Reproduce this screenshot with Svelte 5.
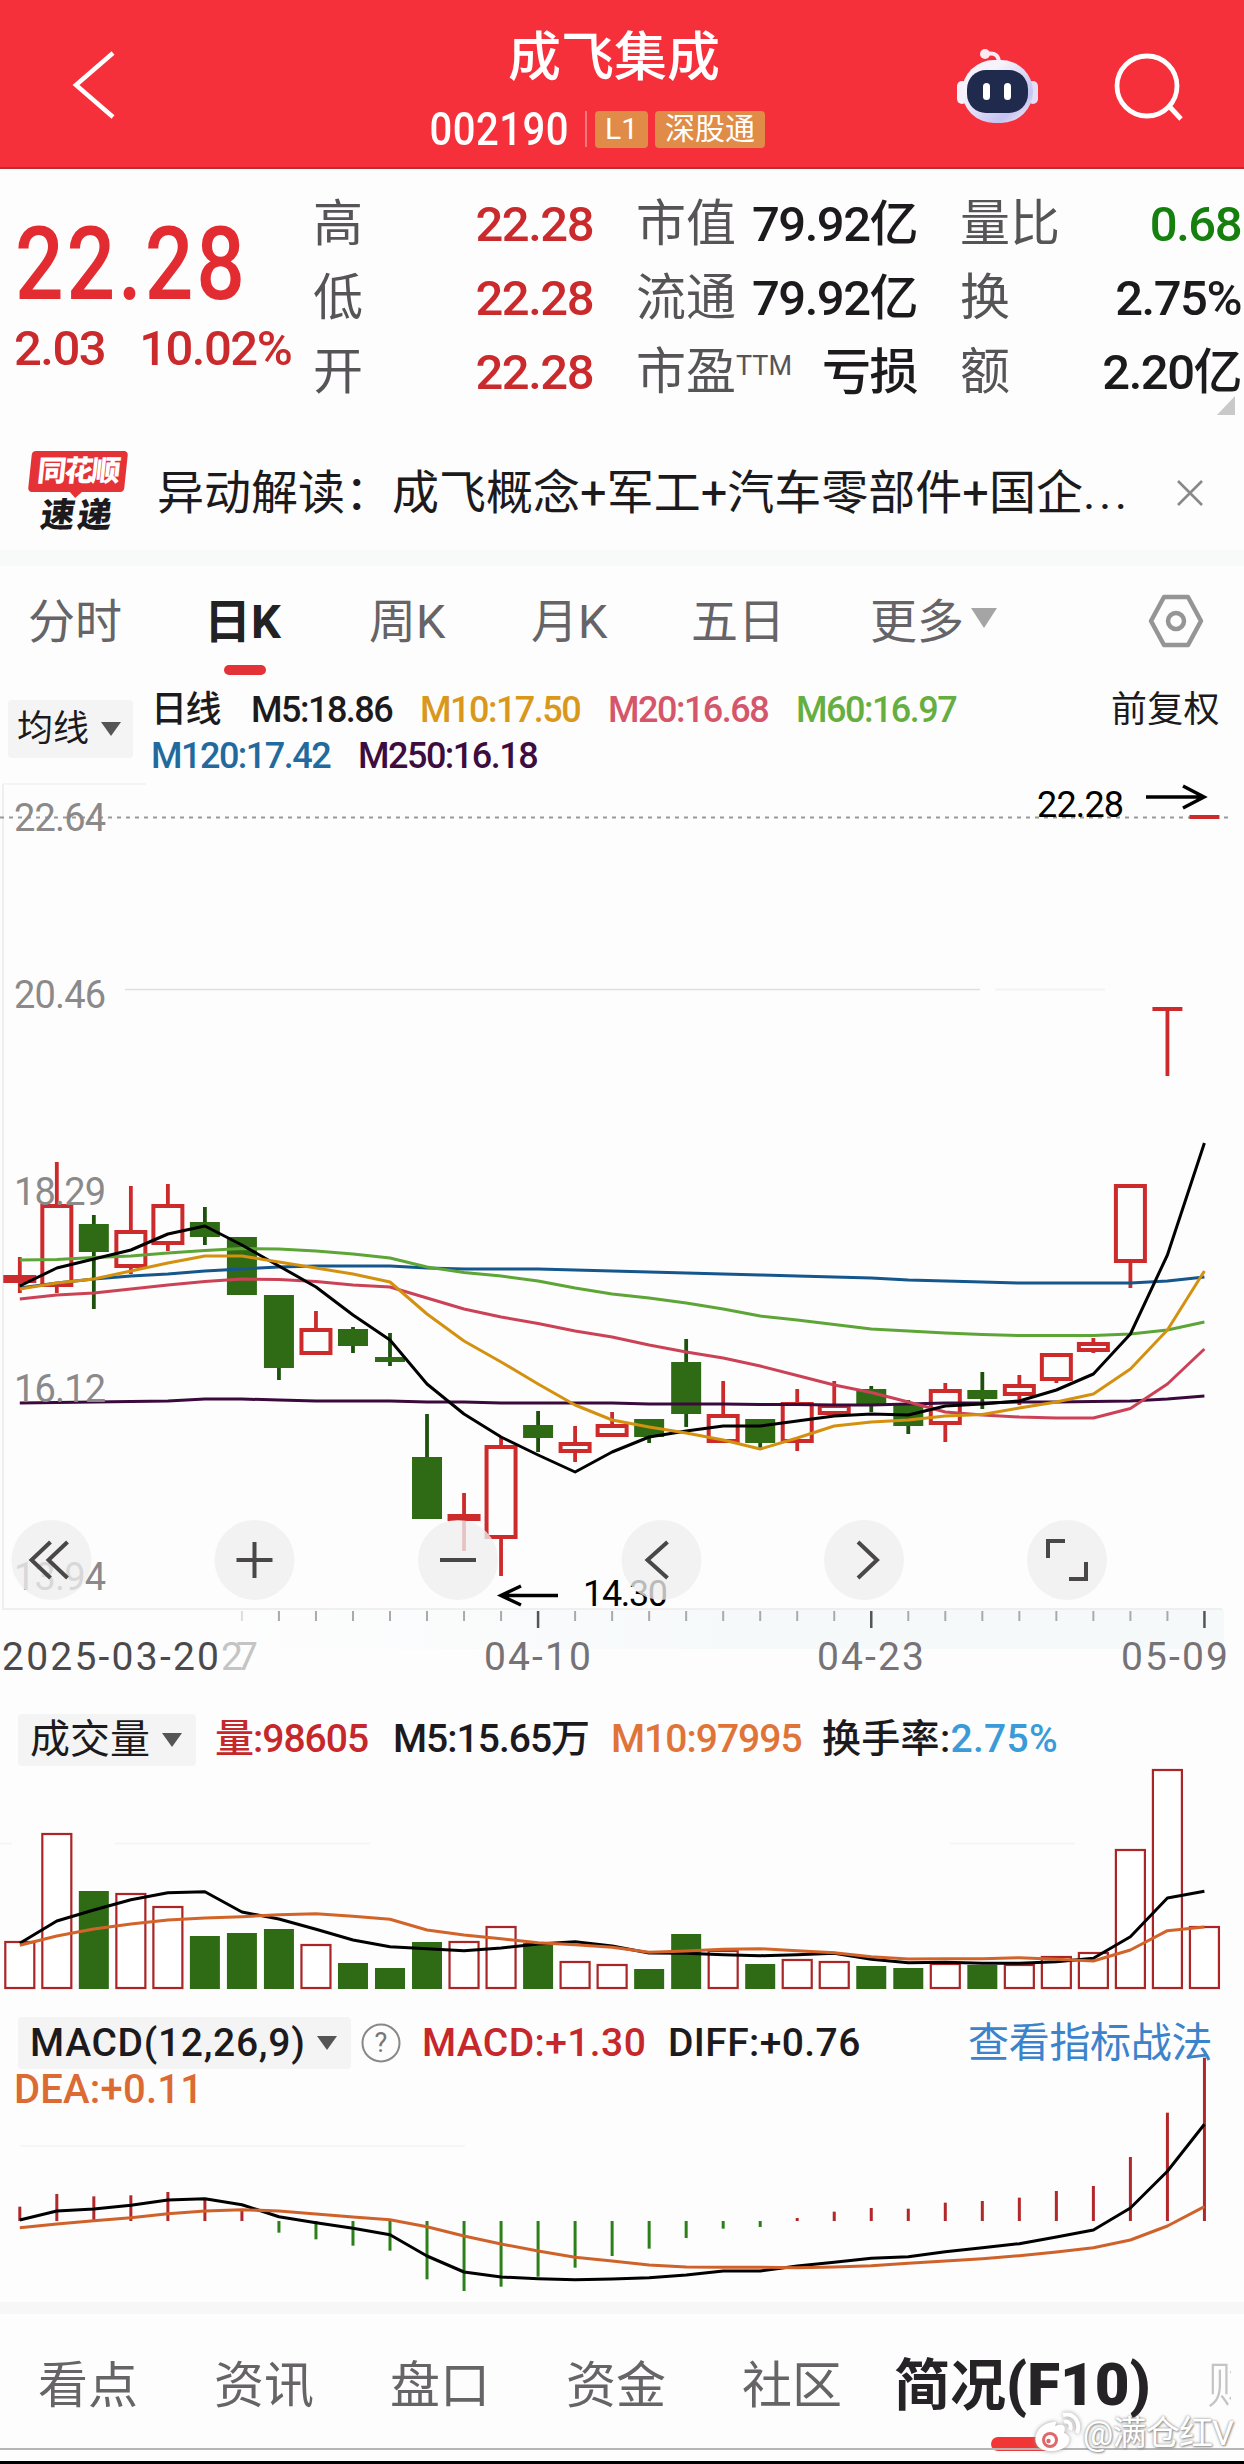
<script>
  const STEP = 37.02;
  const X0 = 19.8;
  const cx = (i) => X0 + STEP * i;

  // [high, top, bottom, low, direction]
  const candles = [
    [1257, 1275, 1283, 1293, 'up'],
    [1162, 1204, 1287, 1293, 'up'],
    [1215, 1224, 1252, 1309, 'down'],
    [1186, 1230, 1268, 1274, 'up'],
    [1184, 1204, 1245, 1251, 'up'],
    [1207, 1222, 1237, 1245, 'down'],
    [1237, 1237, 1295, 1295, 'down'],
    [1295, 1295, 1368, 1380, 'down'],
    [1311, 1328, 1355, 1355, 'up'],
    [1327, 1329, 1346, 1353, 'down'],
    [1333, 1357, 1362, 1366, 'down'],
    [1414, 1457, 1519, 1519, 'down'],
    [1493, 1514, 1521, 1551, 'up'],
    [1437, 1445, 1539, 1576, 'up'],
    [1411, 1425, 1438, 1452, 'down'],
    [1426, 1442, 1453, 1462, 'up'],
    [1412, 1424, 1437, 1437, 'up'],
    [1419, 1419, 1437, 1443, 'down'],
    [1339, 1362, 1414, 1427, 'down'],
    [1381, 1414, 1443, 1443, 'up'],
    [1419, 1419, 1443, 1448, 'down'],
    [1389, 1402, 1443, 1451, 'up'],
    [1381, 1404, 1415, 1415, 'up'],
    [1386, 1389, 1404, 1412, 'down'],
    [1400, 1404, 1426, 1434, 'down'],
    [1383, 1389, 1425, 1442, 'up'],
    [1372, 1390, 1399, 1409, 'down'],
    [1375, 1384, 1396, 1405, 'up'],
    [1353, 1353, 1381, 1383, 'up'],
    [1338, 1342, 1352, 1353, 'up'],
    [1184, 1184, 1263, 1288, 'up'],
    [1007, 1007, 1011, 1076, 'flat'],
    [815, 815, 819, 819, 'flat']
  ];

  const averages = [
    { color: '#3a0a3c', data: [1403, 1402.5, 1402, 1401.5, 1401, 1399, 1399, 1400, 1401, 1401, 1401, 1402, 1402, 1403, 1403, 1403, 1403, 1404, 1404, 1404, 1404.5, 1404.5, 1405, 1405, 1404, 1403, 1403, 1402, 1402, 1401.5, 1401, 1399, 1396] },
    { color: '#15568c', data: [1288, 1283, 1279, 1276, 1274, 1271, 1269, 1267, 1266, 1266, 1266, 1268, 1269, 1269, 1269, 1270, 1271, 1272, 1273, 1274, 1275, 1276, 1277, 1278, 1280, 1281, 1282, 1283, 1283, 1283, 1283, 1281, 1277] },
    { color: '#5da536', data: [1260, 1259.5, 1257.5, 1256, 1253, 1250.5, 1248.5, 1249, 1251, 1254, 1258, 1267, 1272.5, 1276, 1281, 1288, 1294, 1298, 1303, 1309, 1316, 1320, 1324.5, 1329, 1331, 1333, 1334.5, 1335.5, 1335.5, 1335.5, 1334, 1330, 1322] },
    { color: '#cb4257', data: [1299, 1295, 1293, 1289, 1285, 1281.5, 1279, 1279.5, 1281.5, 1285, 1287, 1298, 1309, 1317, 1323.5, 1331, 1337, 1345, 1352, 1358, 1366, 1375.5, 1385, 1392.5, 1402, 1412, 1415, 1417, 1418, 1418, 1408.5, 1384, 1349] },
    { color: '#000', data: [1286, 1268, 1259, 1250, 1234, 1226, 1245, 1266, 1287, 1315, 1340, 1384, 1414, 1437, 1455, 1472, 1452, 1437, 1431, 1426, 1426, 1421, 1416, 1414, 1415, 1406, 1404, 1401, 1390, 1374, 1334, 1255, 1143] },
    { color: '#d3910f', data: [1289, 1283, 1279, 1271, 1263, 1256, 1256, 1262, 1268, 1274, 1282, 1314, 1341, 1362, 1384, 1405, 1420, 1427, 1433, 1440, 1449, 1438, 1426, 1422, 1420, 1416, 1414.5, 1408, 1402, 1394, 1369, 1330, 1271] }
  ];

  // volume panel, heights above the base line
  const volumes = [48, 156, 98, 96, 83, 53, 56, 60, 45, 26, 21, 47, 48, 63, 46, 28, 25, 20, 55, 39, 25, 30, 28, 23, 21, 26, 24, 25, 33, 37, 140, 220, 63];
  const volM5 = [760, 693, 660, 629, 608, 605, 666, 687, 718, 750, 770, 776, 782, 774, 762, 755, 768, 789, 790, 794, 797, 794, 790, 808, 818, 817, 820, 820, 815, 805, 740, 624, 604].map((v) => 1690 + v / 3);
  const volM10 = [766, 738, 717, 702, 690, 684, 680, 674, 671, 679, 688, 720, 735, 746, 758, 764, 772, 787, 783, 778, 776, 782, 788, 800, 807, 806, 806, 803, 808, 813, 780, 722, 711].map((v) => 1690 + v / 3);

  const macd = [590, 552, 559, 556, 546, 565, 603, 668, 688, 707, 722, 808, 843, 830, 800, 773, 738, 716, 684, 656, 651, 624, 605, 594, 596, 578, 573, 563, 543, 528, 441, 308, 143].map((v) => 2010 + v / 3);
  const diff = [630, 603, 597, 586, 570, 566, 584, 620, 638, 655, 674, 738, 786, 801, 806, 809, 807, 803, 795, 783, 783, 768, 757, 745, 740, 725, 713, 701, 681, 660, 594, 484, 343].map((v) => 2010 + v / 3);
  const dea = [653, 642, 632, 623, 611, 603, 599, 603, 612, 621, 629, 650, 678, 702, 723, 742, 753, 765, 771, 772, 772, 773, 771, 767, 760, 753, 746, 737, 726, 713, 690, 648, 590].map((v) => 2010 + v / 3);
  const ZERO = 2221;

  const points = (data) => data.map((y, i) => `${cx(i).toFixed(1)},${y.toFixed(1)}`).join(' ');

  const priceLabels = [
    ['22.64', 831],
    ['20.46', 1008],
    ['18.29', 1205],
    ['16.12', 1402],
    ['13.94', 1590]
  ];

  const ticks = Array.from({ length: 27 }, (_, k) => k + 6);
  const majorTicks = [14, 23, 32];

  const periods = ['分时', '日K', '周K', '月K', '五日'];
  const bottomTabs = ['看点', '资讯', '盘口', '资金', '社区'];
  const controls = [
    [51.5, 'M-1,-18 L-20,0 L-1,18 M16,-18 L-3,0 L16,18'],
    [254.5, 'M-18,0 H18 M0,-18 V18'],
    [458, 'M-18,0 H18'],
    [661.5, 'M6,-18 L-14,0 L6,18'],
    [864, 'M-6,-18 L13,0 L-6,18'],
    [1067, 'M-19,-2 V-19 H-2 M19,2 V19 H2']
  ];
</script>

<div class="page">
  <header>
    <svg class="back" width="50" height="76" viewBox="0 0 50 76"><path d="M43 6 L6 38 L43 70" /></svg>
    <div class="stock">
      <h1>成飞集成</h1>
      <div class="code">
        <span class="num">002190</span>
        <i></i>
        <b class="l1">L1</b>
        <b class="sgt">深股通</b>
      </div>
    </div>
    <svg class="robot" width="84" height="80" viewBox="0 0 84 80">
      <defs>
        <linearGradient id="head" x1="0" y1="0" x2="1" y2="1">
          <stop offset="0.3" stop-color="#f6f3fc" />
          <stop offset="0.75" stop-color="#c5c3f0" />
          <stop offset="1" stop-color="#fbf3fa" />
        </linearGradient>
      </defs>
      <path d="M30 7 C40 5 43 9 43 17" fill="none" stroke="#fde9f1" stroke-width="4" />
      <circle cx="29" cy="7" r="5" fill="#fde9f1" />
      <rect x="1" y="34" width="10" height="23" rx="5" fill="#f4f1fc" />
      <rect x="72" y="34" width="10" height="23" rx="5" fill="#e3dff8" />
      <rect x="6" y="13" width="71" height="63" rx="32" fill="url(#head)" />
      <rect x="11" y="23" width="61" height="43" rx="19" fill="#1f2a4c" />
      <rect x="27" y="36" width="7" height="17" rx="3.5" fill="#fff" />
      <rect x="48" y="36" width="7" height="17" rx="3.5" fill="#fff" />
    </svg>
    <svg class="search" width="72" height="72" viewBox="0 0 72 72">
      <circle cx="34" cy="34" r="30" />
      <path d="M56 54 L68 67" />
    </svg>
  </header>

  <section class="quote">
    <div class="price">
      <strong>22.28</strong>
      <div class="change"><span>2.03</span><span>10.02%</span></div>
    </div>
    <dl>
      <dt>高</dt><dd class="red">22.28</dd>
      <dt>市值</dt><dd>79.92亿</dd>
      <dt>量比</dt><dd class="green">0.68</dd>
      <dt>低</dt><dd class="red">22.28</dd>
      <dt>流通</dt><dd>79.92亿</dd>
      <dt>换</dt><dd>2.75%</dd>
      <dt>开</dt><dd class="red">22.28</dd>
      <dt>市盈<sup>TTM</sup></dt><dd>亏损</dd>
      <dt>额</dt><dd>2.20亿</dd>
    </dl>
    <span class="corner"></span>
  </section>

  <section class="notice">
    <div class="logo">
      <span class="bubble">同花顺</span>
      <span class="express">速递</span>
    </div>
    <p>异动解读：成飞概念+军工+汽车零部件+国企<span>...</span></p>
    <svg width="28" height="28" viewBox="0 0 28 28"><path d="M2 2 L26 26 M26 2 L2 26" stroke="#888" stroke-width="2.6" /></svg>
  </section>

  <nav class="periods">
    {#each periods as p, i}
      <span class:active={i === 1}>{p}</span>
    {/each}
    <span>更多<em class="tri light"></em></span>
    <svg width="56" height="56" viewBox="0 0 56 56">
      <path d="M16 4 H40 L53 28 L40 52 H16 L3 28 Z" stroke-linejoin="round" />
      <circle cx="28" cy="28" r="8" />
    </svg>
  </nav>

  <section class="ma">
    <div class="picker">均线<em class="tri"></em></div>
    <div class="legend">
      <span>日线</span>
      <span>M5:18.86</span>
      <span class="gold">M10:17.50</span>
      <span class="pink">M20:16.68</span>
      <span class="lime">M60:16.97</span>
      <span class="adjust">前复权</span>
    </div>
    <div class="legend second">
      <span class="blue">M120:17.42</span>
      <span class="purple">M250:16.18</span>
    </div>
  </section>

  <svg class="chart" width="1244" height="920" viewBox="0 780 1244 920">
    <defs>
      <linearGradient id="axis" x1="0" x2="1" y1="0" y2="0">
        <stop offset="0.2" stop-color="#fdfdfd" />
        <stop offset="0.6" stop-color="#f6f9fa" />
      </linearGradient>
    </defs>
    <rect x="0" y="1609" width="1224" height="40" fill="url(#axis)" />
    <path d="M3 784 V1609 H1222" fill="none" stroke="#efefef" stroke-width="2" />
    <path d="M3 784 H146" stroke="#f4f4f4" stroke-width="2" />
    <line x1="0" x2="1228" y1="817.5" y2="817.5" stroke="#999" stroke-width="2" stroke-dasharray="4 5" />
    <line x1="125" x2="980" y1="989.5" y2="989.5" stroke="#e0e0e0" stroke-width="1.5" />
    <line x1="995" x2="1105" y1="989.5" y2="989.5" stroke="#f3f3f3" stroke-width="2" />

    {#each candles as [high, top, bottom, low, dir], i}
      {#if dir === 'up'}
        <path class="wick up" d="M{cx(i)} {high} V{top} M{cx(i)} {bottom} V{low}" />
        <rect class="body up" x={cx(i) - 14.5} y={top + 2} width="29" height={Math.max(bottom - top - 4, 2)} />
      {:else if dir === 'down'}
        <line class="wick down" x1={cx(i)} x2={cx(i)} y1={high} y2={low} />
        <rect fill="#2f6b14" x={cx(i) - 15} y={top} width="30" height={bottom - top} />
      {:else}
        <path class="wick up" d="M{cx(i) - 15} {top + 2} h30 M{cx(i)} {top + 2} V{low}" />
      {/if}
    {/each}

    {#each averages as line}
      <polyline class="line" points={points(line.data)} stroke={line.color} />
    {/each}

    {#each priceLabels as [label, y]}
      <text x="14" {y} textLength="92" class="scale">{label}</text>
    {/each}

    <text x="1037" y="817" textLength="87" class="mark">22.28</text>
    <path class="arrow" d="M1146 797 H1203 M1183 786 L1204 797 L1183 808" />
    <text x="583" y="1606" textLength="85" class="mark">14.30</text>
    <path class="arrow" d="M558 1595.5 H503 M521 1586 L501 1595.5 L521 1605" />

    {#each controls as [x, d]}
      <g transform="translate({x} 1560)">
        <circle r="40" fill="#eeeeee" fill-opacity="0.78" />
        <path {d} fill="none" stroke="#494747" stroke-width="4" />
      </g>
    {/each}

    {#each ticks as i}
      {#if majorTicks.includes(i)}
        <line x1={cx(i)} x2={cx(i)} y1="1611" y2="1628" stroke="#555" stroke-width="2.5" />
      {:else}
        <line x1={cx(i)} x2={cx(i)} y1="1611" y2="1621" stroke={i === 6 ? '#ddd' : '#aaa'} stroke-width="2" />
      {/if}
    {/each}

    <text x="221" y="1670" textLength="37" class="date faint">27</text>
    <text x="2" y="1670" textLength="217" class="date dark">2025-03-20</text>
    <text x="484" y="1670" textLength="107" class="date">04-10</text>
    <text x="817" y="1670" textLength="107" class="date">04-23</text>
    <text x="1121" y="1670" textLength="107" class="date">05-09</text>
  </svg>

  <section class="indicator volume">
    <div class="picker">成交量<em class="tri"></em></div>
    <span class="crimson">量:98605</span>
    <span>M5:15.65万</span>
    <span class="orange">M10:97995</span>
    <span class="turnover">换手率:<span class="sky">2.75%</span></span>
  </section>

  <svg class="chart" width="1244" height="240" viewBox="0 1770 1244 240">
    <path d="M0 1843.5 H12 M115 1843.5 H370 M950 1843.5 H1075" stroke="#f5f5f5" stroke-width="2" />
    {#each volumes as h, i}
      {#if candles[i][4] === 'down'}
        <rect fill="#2f6b14" x={cx(i) - 15} y={1989 - h} width="30" height={h} />
      {:else}
        <rect fill="#fff" stroke="#a92526" stroke-width="2.2" x={cx(i) - 14.5} y={1990 - h} width="29" height={h - 2} />
      {/if}
    {/each}
    <polyline class="line" points={points(volM5)} stroke="#000" />
    <polyline class="line" points={points(volM10)} stroke="#d2642a" />
  </svg>

  <section class="indicator macd">
    <div class="picker"><span>MACD(12,26,9)</span><em class="tri"></em></div>
    <svg class="help" width="42" height="42" viewBox="0 0 42 42">
      <circle cx="21" cy="21" r="18.5" fill="none" stroke="#888" stroke-width="2" />
      <text x="21" y="30" text-anchor="middle">?</text>
    </svg>
    <span class="crimson">MACD:+1.30</span>
    <span>DIFF:+0.76</span>
    <span class="link">查看指标战法</span>
  </section>
  <div class="dea">DEA:+0.11</div>

  <svg class="chart" width="1244" height="192" viewBox="0 2110 1244 192">
    <path d="M20 2146 H465" stroke="#f6f6f6" stroke-width="2" />
    {#each macd as y, i}
      <line x1={cx(i)} x2={cx(i)} y1={ZERO} y2={y} stroke={y > ZERO ? '#2b8019' : '#b1272a'} stroke-width="3" />
    {/each}
    <polyline class="line" points={points(diff)} stroke="#000" />
    <polyline class="line" points={points(dea)} stroke="#cf622b" />
  </svg>

  <nav class="bottom">
    {#each bottomTabs as t}
      <span>{t}</span>
    {/each}
    <span class="active">简况<b>(F10)</b></span>
    <span class="next">财</span>
    <div class="watermark">
      <svg width="50" height="44" viewBox="0 0 50 44">
        <path d="M20 11 C8 12 0 23 3 32 C7 44 32 42 36 31 C38 26 34 23 31 22 C34 14 29 12 22 15 C24 11 23 10 20 11 Z" />
        <circle class="iris" cx="17" cy="29" r="8" />
        <circle cx="17" cy="29" r="5" />
        <circle class="iris" cx="15.5" cy="30" r="2.2" />
        <path class="wave" d="M31 11 C36 9 39 14 37 19 M30 4 C41 1 48 11 44 22" />
      </svg>
      <span>@满仓红V</span>
    </div>
  </nav>
</div>

<style>
  :global(body) {
    background: #fdfdfd;
  }

  .page {
    width: 1244px;
    height: 2464px;
    overflow: hidden;
    background: #fdfdfd;
    color: #1c1a1c;
    font-family: Roboto, 'Noto Sans CJK SC', sans-serif;
    line-height: 1;
    white-space: nowrap;
  }

  svg {
    display: block;
    flex: none;
  }

  header {
    display: flex;
    height: 169px;
    box-sizing: border-box;
    background: #f5303b;
    border-bottom: 2px solid #c12a34;
    color: #fff;
  }

  .back {
    margin: 47px 0 0 70px;
  }

  .back path {
    fill: none;
    stroke: #fff;
    stroke-width: 4.5;
  }

  .stock {
    width: 340px;
    margin-left: 309px;
  }

  h1 {
    margin: 31px 0 0 79px;
    font-size: 53px;
    font-weight: 500;
    line-height: 54px;
  }

  .code {
    display: flex;
    align-items: center;
    height: 38px;
    margin-top: 25px;
  }

  .num {
    width: 156px;
    font-size: 46px;
    font-weight: 500;
    letter-spacing: 0.6px;
    transform: scaleX(0.87);
    transform-origin: 3px 0;
  }

  .code i {
    width: 2px;
    height: 36px;
    margin-right: 8px;
    background: #f4777b;
  }

  .code b {
    height: 37px;
    border-radius: 4px;
    background: #e08b48;
    font-size: 30px;
    font-weight: 400;
    line-height: 36px;
    text-align: center;
  }

  .l1 {
    width: 53px;
    margin-right: 7px;
  }

  .sgt {
    width: 110px;
  }

  .robot {
    margin: 47px 0 0 187px;
  }

  .search {
    margin: 52px 0 0 73px;
  }

  .search circle,
  .search path {
    fill: none;
    stroke: #fff;
    stroke-width: 4.8;
  }

  .quote {
    position: relative;
    display: flex;
    height: 251px;
  }

  .price {
    width: 316px;
    color: #e32b32;
  }

  .price strong {
    display: block;
    margin: 44px 0 0 15px;
    font-size: 102px;
    font-weight: 500;
    letter-spacing: 3.4px;
    transform: scaleX(0.84);
    transform-origin: 0 0;
  }

  .change {
    display: flex;
    gap: 34px;
    margin: 9px 0 0 14px;
    color: #cb2a2d;
    font-size: 49px;
    font-weight: 500;
    letter-spacing: -1.5px;
  }

  dl {
    display: grid;
    grid-template-columns: 160px 119px 160px 122px 160px 121px;
    grid-auto-rows: 74px;
    align-items: center;
    width: 928px;
    margin: 18px 0 0 -3px;
    font-size: 49px;
  }

  dt {
    color: #565456;
    font-size: 50px;
  }

  dt:nth-of-type(3n + 2) {
    margin-left: 44px;
  }

  dt:nth-of-type(3n) {
    margin-left: 86px;
  }

  dd {
    display: flex;
    justify-content: flex-end;
    margin: 0 -1px 0 0;
    font-weight: 500;
    letter-spacing: -1.5px;
  }

  dd:nth-of-type(3n + 2) {
    margin-right: -43px;
  }

  dd:nth-of-type(3n) {
    margin-right: -86px;
  }

  sup {
    font-size: 27px;
    line-height: 0;
    vertical-align: 14px;
  }

  .red {
    color: #cb2a2d;
  }

  .green {
    color: #16800f;
  }

  .corner {
    position: absolute;
    right: 9px;
    bottom: 5px;
    border-left: 18px solid transparent;
    border-bottom: 19px solid #c9c9c9;
  }

  .notice {
    display: flex;
    align-items: center;
    height: 130px;
    padding-top: 15px;
    box-sizing: border-box;
  }

  .logo {
    width: 127px;
    padding-left: 30px;
  }

  .bubble {
    position: relative;
    display: block;
    width: 96px;
    height: 41px;
    margin-top: -3px;
    border-radius: 4px;
    background: #e53236;
    color: #fff;
    font-size: 29px;
    font-weight: 900;
    letter-spacing: -2px;
    line-height: 40px;
    text-align: center;
    transform: skewX(-6deg);
  }

  .bubble::after {
    content: '';
    position: absolute;
    left: 41px;
    top: 40px;
    border: 7px solid transparent;
    border-top-color: #e53236;
  }

  .express {
    display: block;
    width: 80px;
    margin: 6px 0 0 11px;
    font-size: 34px;
    font-weight: 900;
    letter-spacing: 3px;
    transform: skewX(-8deg);
  }

  .notice p {
    width: 1019px;
    margin: 0;
    font-size: 47px;
  }

  .notice p span {
    letter-spacing: 3.5px;
  }

  .periods {
    display: grid;
    grid-template-columns: 176px 165px 162px 160px 179px 278px 60px;
    align-items: center;
    height: 126px;
    margin-bottom: 12px;
    padding-left: 28px;
    border-top: 16px solid #f8f9f9;
    box-sizing: border-box;
    color: #666466;
    font-size: 47px;
  }

  .periods > * {
    position: relative;
  }

  .periods .active {
    color: #222;
    font-weight: 700;
  }

  .periods .active::after {
    content: '';
    position: absolute;
    left: 20px;
    bottom: -30px;
    width: 42px;
    height: 10px;
    border-radius: 5px;
    background: #e33238;
  }

  .periods svg path,
  .periods svg circle {
    fill: none;
    stroke: #959595;
    stroke-width: 4.5;
  }

  .tri {
    display: inline-block;
    flex: none;
    margin-left: 12px;
    border: 10px solid transparent;
    border-top: 14px solid #555;
    border-bottom: 0;
    vertical-align: middle;
  }

  .tri.light {
    margin-left: 7px;
    border-width: 20px 13px 0;
    border-top-color: #a5a5a5;
    vertical-align: 10px;
  }

  .ma {
    display: grid;
    grid-template-columns: 144px 1fr;
    grid-template-rows: 44px 48px;
    height: 92px;
    font-size: 36px;
  }

  .picker {
    display: flex;
    align-items: center;
    border-radius: 4px;
    background: #f4f4f4;
  }

  .ma .picker {
    grid-row: 1 / 3;
    width: 125px;
    height: 58px;
    margin: 12px 0 0 8px;
    padding-left: 9px;
    box-sizing: border-box;
  }

  .legend {
    display: grid;
    grid-template-columns: 100px 169px 188px 188px 315px 120px;
    align-items: center;
    padding-left: 7px;
    letter-spacing: -1.5px;
    font-weight: 500;
  }

  .legend.second {
    grid-template-columns: 207px 200px;
  }

  .legend .adjust {
    font-weight: 400;
    letter-spacing: 0.3px;
  }

  .gold { color: #d9981b; }
  .pink { color: #d5566a; }
  .lime { color: #65af41; }
  .blue { color: #226a9e; }
  .purple { color: #3d0d3f; }
  .crimson { color: #c5272b; }
  .orange { color: #e07438; }
  .sky { color: #3a9bd8; }

  .chart {
    overflow: visible;
  }

  .line {
    fill: none;
    stroke-width: 3;
    stroke-linejoin: round;
  }

  .wick {
    fill: none;
    stroke-width: 3.8;
  }

  .wick.up {
    stroke: #cd2a2c;
  }

  .wick.down {
    stroke: #1d520d;
  }

  .body.up {
    fill: #fdfdfd;
    stroke: #cd2a2c;
    stroke-width: 4;
  }

  .scale {
    fill: #8b8989;
    font-size: 38px;
  }

  .mark {
    fill: #000;
    font-size: 36px;
  }

  .arrow {
    fill: none;
    stroke: #000;
    stroke-width: 3.5;
  }

  .date {
    fill: #777275;
    font-size: 39px;
  }

  .date.dark {
    fill: #4c494b;
  }

  .date.faint {
    fill: #c4c4c4;
  }

  .indicator {
    display: grid;
    align-items: center;
    font-size: 39px;
  }

  .indicator .picker {
    height: 52px;
    padding-left: 12px;
    box-sizing: border-box;
  }

  .volume {
    grid-template-columns: 197px 178px 218px 211px 300px;
    height: 70px;
    padding: 9px 0 0 18px;
    box-sizing: border-box;
    font-weight: 500;
    letter-spacing: -1px;
  }

  .volume .picker {
    width: 178px;
    font-size: 40px;
    font-weight: 400;
    letter-spacing: 0;
  }

  .turnover {
    letter-spacing: 0.3px;
  }

  .macd {
    grid-template-columns: 342px 62px 246px 300px 250px;
    height: 60px;
    padding: 6px 0 0 18px;
    box-sizing: border-box;
    font-weight: 500;
    letter-spacing: 0.4px;
  }

  .macd .picker {
    width: 333px;
    letter-spacing: 0.7px;
  }

  .help text {
    fill: #777;
    font-size: 27px;
    font-weight: 400;
  }

  .macd .link {
    color: #3b83cb;
    font-size: 41px;
    font-weight: 400;
    letter-spacing: -0.3px;
  }

  .dea {
    height: 40px;
    padding-left: 14px;
    color: #db6a33;
    font-size: 40px;
    font-weight: 500;
    line-height: 40px;
    letter-spacing: 0.2px;
  }

  .bottom {
    position: relative;
    display: grid;
    grid-template-columns: 176px 176px 176px 176px 152px 313px 24px;
    align-items: center;
    height: 162px;
    padding: 0 0 4px 38px;
    border-top: 12px solid #f7f7f7;
    border-bottom: 3px solid #000;
    box-sizing: border-box;
    color: #666466;
    font-size: 50px;
  }

  .bottom::after {
    content: '';
    position: absolute;
    left: 0;
    right: 0;
    bottom: 11px;
    height: 2px;
    background: #b5b5b5;
  }

  .bottom .active {
    position: relative;
    color: #252325;
    font-size: 56px;
    font-weight: 700;
  }

  .active b {
    font-size: 60px;
    line-height: 50px;
  }

  .bottom .active::after {
    content: '';
    position: absolute;
    left: 97px;
    bottom: -37px;
    width: 66px;
    height: 14px;
    border-radius: 7px;
    background: #f23535;
  }

  .next {
    overflow: hidden;
    color: #c4c4c4;
    font-weight: 300;
  }

  .watermark {
    position: absolute;
    z-index: 1;
    right: 11px;
    bottom: 6px;
    display: flex;
    align-items: center;
    color: #fff;
    font-size: 34px;
    letter-spacing: -0.8px;
    text-shadow: 0 0 3px #888, 1px 1px 2px #999;
  }

  .watermark svg {
    fill: #fff;
    filter: drop-shadow(0 0 2px #999);
  }

  .watermark .iris {
    fill: #dd6a6a;
  }

  .watermark .wave {
    fill: none;
    stroke: #fff;
    stroke-width: 4;
  }
</style>
